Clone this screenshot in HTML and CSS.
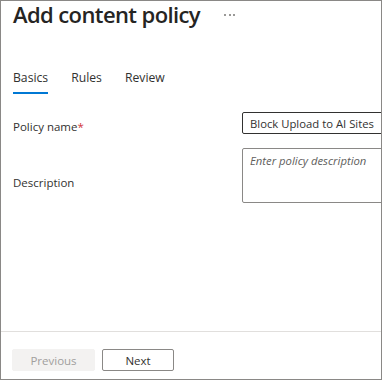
FILE: index.html
```html
<!DOCTYPE html>
<html lang="en">
  <head>
    <meta charset="UTF-8" />
    <meta name="viewport" content="width=device-width, initial-scale=1.0" />
    <title>Add content policy</title>
    <link rel="stylesheet" href="styles.css">
  </head>
  <body>
    <div class="panel">
      <div class="header">
        <h1>Add content policy</h1>
        <span class="more"><i></i><i></i><i></i></span>
      </div>

      <div class="tabs">
        <span class="tab active">Basics</span>
        <span class="tab">Rules</span>
        <span class="tab">Review</span>
      </div>

      <div class="form">
        <label class="row-label" for="policyName">Policy name<span class="req">*</span></label>
        <input class="field" type="text" id="policyName" value="Block Upload to AI Sites" />

        <label class="row-label desc" for="description">Description</label>
        <textarea class="field area" id="description" placeholder="Enter policy description"></textarea>
      </div>

      <div class="footer">
        <button class="btn" disabled>Previous</button>
        <button class="btn next">Next</button>
      </div>
    </div>
  </body>
</html>
```

FILE: styles.css
```css
* {
  box-sizing: border-box;
}

body {
  margin: 0;
  font-family: "Open Sans", "Noto Sans", Arial, sans-serif;
  color: #323130;
  background: #fff;
}

.panel {
  width: 382px;
  height: 380px;
  border: 1px solid #8a8886;
  display: flex;
  flex-direction: column;
  overflow: hidden;
}

.header {
  display: flex;
  align-items: center;
  padding-left: 12px;
  height: 26px;
}

h1 {
  margin: 0;
  font-size: 22px;
  font-weight: 600;
  letter-spacing: -0.6px;
  line-height: 26px;
  color: #252423;
}

.more {
  display: flex;
  gap: 2.5px;
  margin-left: 24px;
  margin-top: 1px;
}

.more i {
  width: 2px;
  height: 2px;
  border-radius: 50%;
  background: #797775;
}

.tabs {
  display: flex;
  gap: 23px;
  padding: 43px 0 0 12px;
}

.tab {
  font-size: 12.2px;
  line-height: 16px;
  color: #323130;
  padding-bottom: 6px;
  border-bottom: 2px solid transparent;
}

.tab.active {
  border-bottom-color: #0078d4;
}

.form {
  display: grid;
  grid-template-columns: 229px 160px;
  align-items: start;
  row-gap: 13px;
  padding: 18px 0 0 12px;
}

.row-label {
  font-size: 11.5px;
  line-height: 16px;
  margin-top: 7px;
  color: #323130;
}

.row-label.desc {
  margin-top: 27px;
}

.req {
  color: #d13438;
}

.field {
  font-family: inherit;
  font-size: 11.3px;
  color: #323130;
  border: 1px solid #323130;
  border-radius: 2px;
  height: 22px;
  padding: 0 7px;
  margin: 0;
  outline: none;
}

.area {
  height: 55px;
  border-color: #8a8886;
  resize: none;
  padding: 4px 7px;
}

.area::placeholder {
  color: #605e5c;
  font-style: italic;
}

.footer {
  margin-top: auto;
  border-top: 1px solid #e1dfdd;
  display: flex;
  gap: 7px;
  padding: 17px 0 8px 11px;
}

.btn {
  font-family: inherit;
  font-size: 11.5px;
  height: 22px;
  padding: 0;
  width: 83px;
  border-radius: 2px;
  border: 1px solid #f3f2f1;
  background: #f3f2f1;
  color: #a19f9d;
}

.btn.next {
  width: 72px;
  background: #fff;
  border-color: #8a8886;
  color: #323130;
  font-weight: 500;
}
```
